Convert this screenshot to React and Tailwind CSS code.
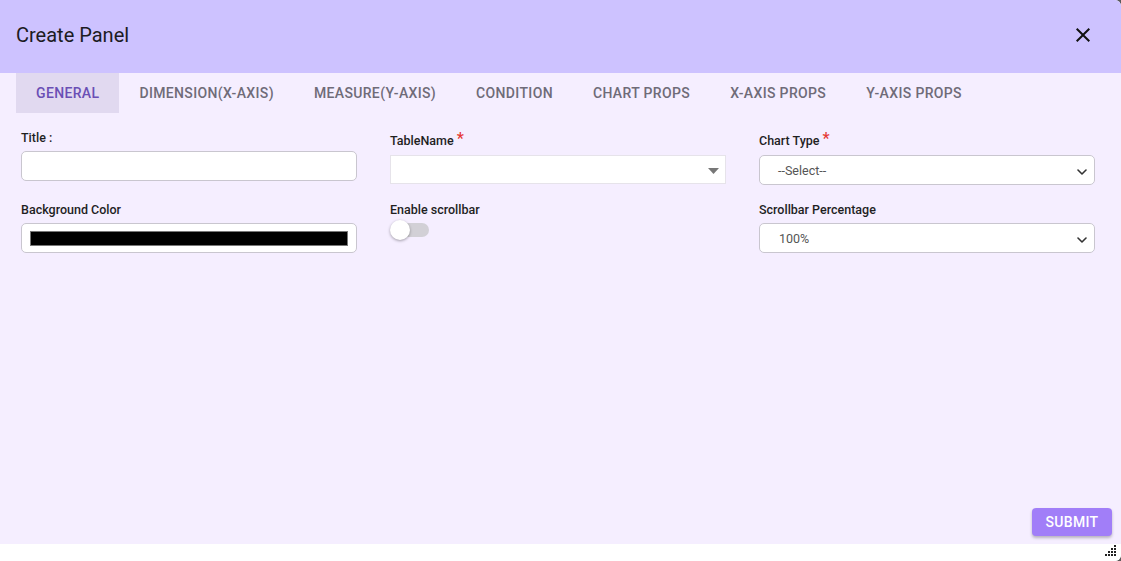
import React from "react";

const Chevron = () => (
  <svg width="10" height="6" viewBox="0 0 10 6" className="absolute right-[7px] top-[13px]">
    <path d="M1 1l4 4 4-4" fill="none" stroke="#333" strokeWidth="1.6" strokeLinecap="round" strokeLinejoin="round" />
  </svg>
);

export default function App() {
  const tabs = ["GENERAL", "DIMENSION(X-AXIS)", "MEASURE(Y-AXIS)", "CONDITION", "CHART PROPS", "X-AXIS PROPS", "Y-AXIS PROPS"];
  return (
    <div className="w-[1121px] h-[561px] bg-[#5a5a5a] overflow-hidden" style={{ fontFamily: "Roboto, 'Liberation Sans', sans-serif" }}>
      <div className="w-full h-full flex flex-col bg-white rounded-tr-[6px] rounded-br-[6px] overflow-hidden">
        <div className="h-[73px] shrink-0 bg-[#cdc2ff] flex items-center justify-between pl-4 pr-[26px] pb-[3px]">
          <div className="text-[20px] text-[#1c1b22] leading-none">Create Panel</div>
          <svg width="24" height="24" viewBox="0 0 24 24">
            <path d="M19 6.41 17.59 5 12 10.59 6.41 5 5 6.41 10.59 12 5 17.59 6.41 19 12 13.41 17.59 19 19 17.59 13.41 12z" fill="#111" />
          </svg>
        </div>
        <div className="h-[471px] shrink-0 bg-[#f5eeff] flex flex-col">
          <div className="h-[40px] flex pl-4">
            {tabs.map((t, i) => (
              <div
                key={t}
                className={
                  "h-full px-5 flex items-center text-[14px] font-medium tracking-[0.35px] " +
                  (i === 0 ? "bg-[#e1d9f0] text-[#6a4fb5]" : "text-[#6f6b78]")
                }
              >
                {t}
              </div>
            ))}
          </div>
          <div className="grid grid-cols-[336px_336px_336px] gap-x-[33px] gap-y-[17px] px-[21px] pt-[18px] items-start">
            <div className="flex flex-col">
              <div className="h-[14px] text-[12.5px] font-medium text-[#1f1f1f] leading-[14px]">Title :</div>
              <div className="mt-[6px] h-[30px] bg-white border border-[#c9c6cf] rounded-[5px]" />
            </div>
            <div className="flex flex-col">
              <div className="h-[20px] flex items-start text-[12.5px] font-medium text-[#1f1f1f] leading-[14px]">
                <span className="pt-[3px]">TableName</span>
                <span className="text-[#e53935] text-[16px] leading-none ml-[3px]">*</span>
              </div>
              <div className="mt-[4px] h-[29px] bg-white border border-[#e6e3ea] relative">
                <svg width="11" height="6" viewBox="0 0 11 6" className="absolute right-[6px] top-[12px]">
                  <path d="M0 0h11L5.5 6z" fill="#777" />
                </svg>
              </div>
            </div>
            <div className="flex flex-col">
              <div className="h-[20px] flex items-start text-[12.5px] font-medium text-[#1f1f1f] leading-[14px]">
                <span className="pt-[3px]">Chart Type</span>
                <span className="text-[#e53935] text-[16px] leading-none ml-[3px]">*</span>
              </div>
              <div className="mt-[4px] h-[30px] bg-white border border-[#c9c6cf] rounded-[5px] relative flex items-center pl-[18px] pt-[2px] text-[12.5px] text-[#555]">
                --Select--
                <Chevron />
              </div>
            </div>

            <div className="flex flex-col">
              <div className="h-[15px] pt-[1px] text-[12.5px] font-medium text-[#1f1f1f] leading-[14px]">Background Color</div>
              <div className="mt-[6px] h-[30px] bg-white border border-[#c9c6cf] rounded-[5px] flex items-center px-[8px]">
                <div className="w-full h-[15px] bg-black border border-[#777]" />
              </div>
            </div>
            <div className="flex flex-col">
              <div className="h-[15px] pt-[1px] text-[12.5px] font-medium text-[#1f1f1f] leading-[14px]">Enable scrollbar</div>
              <div className="mt-[3px] relative w-[40px] h-[20px]">
                <div className="absolute left-[4px] top-[3px] w-[35px] h-[14px] rounded-full bg-[#d2d0d6]" />
                <div className="absolute left-0 top-0 w-[20px] h-[20px] rounded-full bg-white shadow-[0_1px_3px_rgba(0,0,0,0.35)]" />
              </div>
            </div>
            <div className="flex flex-col">
              <div className="h-[15px] pt-[1px] text-[12.5px] font-medium text-[#1f1f1f] leading-[14px]">Scrollbar Percentage</div>
              <div className="mt-[6px] h-[30px] bg-white border border-[#c9c6cf] rounded-[5px] relative flex items-center pl-[19px] pt-[2px] text-[12.5px] text-[#555]">
                100%
                <Chevron />
              </div>
            </div>
          </div>
          <div className="flex-1" />
          <div className="flex justify-end pr-[9px] pb-[8px]">
            <div className="h-[28px] w-[80px] flex items-center justify-center bg-[#a17ef8] text-white text-[14px] font-medium tracking-[0.3px] rounded-[4px] shadow-[0_2px_3px_rgba(0,0,0,0.25)]">
              SUBMIT
            </div>
          </div>
        </div>
        <div className="flex-1 bg-white flex justify-end items-end pr-[4px] pb-[4px]">
          <svg width="12" height="12" viewBox="0 0 12 12">
            <rect x="9" y="0" width="2" height="2" fill="#222" />
            <rect x="6" y="3" width="2" height="2" fill="#222" />
            <rect x="9" y="3" width="2" height="2" fill="#222" />
            <rect x="3" y="6" width="2" height="2" fill="#222" />
            <rect x="6" y="6" width="2" height="2" fill="#222" />
            <rect x="9" y="6" width="2" height="2" fill="#222" />
            <rect x="0" y="9" width="2" height="2" fill="#222" />
            <rect x="3" y="9" width="2" height="2" fill="#222" />
            <rect x="6" y="9" width="2" height="2" fill="#222" />
            <rect x="9" y="9" width="2" height="2" fill="#222" />
          </svg>
        </div>
      </div>
    </div>
  );
}
